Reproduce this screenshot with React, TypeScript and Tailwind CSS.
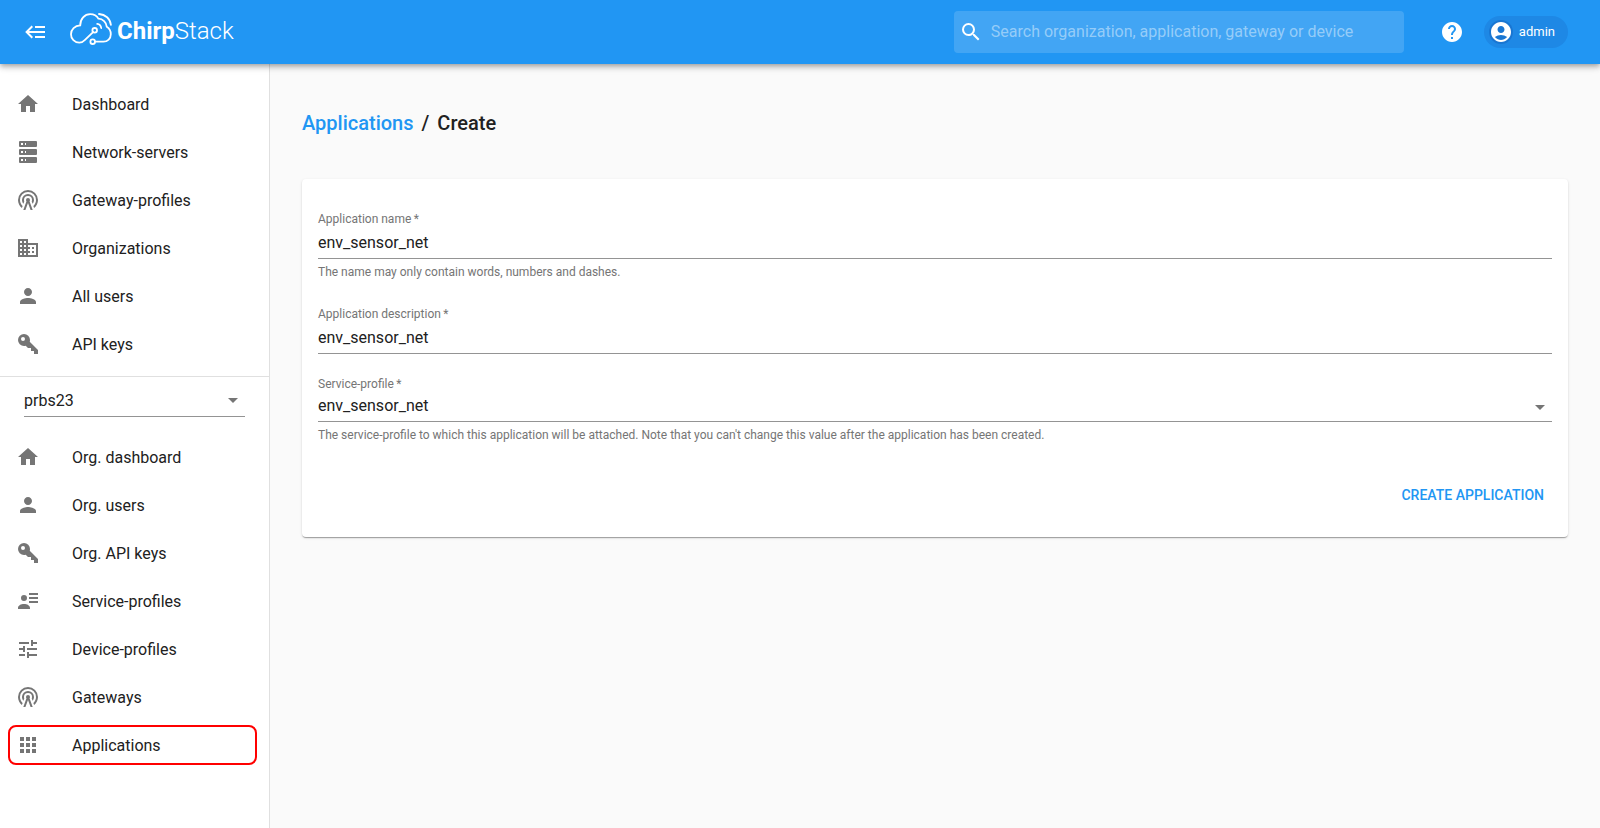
import React, { useState } from 'react';
import {
  MdAccountCircle,
  MdApps,
  MdArrowDropDown,
  MdHelp,
  MdHome,
  MdPerson,
  MdSearch,
  MdTune
} from 'react-icons/md';

interface PathIconProps {
  path: string;
  className?: string;
}

const PathIcon: React.FC<PathIconProps> = ({ path, className = 'size-6' }) => (
  <svg viewBox="0 0 24 24" fill="currentColor" className={className} aria-hidden="true">
    <path d={path} />
  </svg>
);

const PATHS = {
  backburger:
    'M5,13L9,17L7.6,18.42L1.18,12L7.6,5.58L9,7L5,11H21V13H5M21,6V8H11V6H21M21,16V18H11V16H21Z',
  server:
    'M4,1H20A1,1 0 0,1 21,2V6A1,1 0 0,1 20,7H4A1,1 0 0,1 3,6V2A1,1 0 0,1 4,1M4,9H20A1,1 0 0,1 21,10V14A1,1 0 0,1 20,15H4A1,1 0 0,1 3,14V10A1,1 0 0,1 4,9M4,17H20A1,1 0 0,1 21,18V22A1,1 0 0,1 20,23H4A1,1 0 0,1 3,22V18A1,1 0 0,1 4,17M9,5H10V3H9V5M9,13H10V11H9V13M9,21H10V19H9V21M5,3V5H7V3H5M5,11V13H7V11H5M5,19V21H7V19H5Z',
  radioTower:
    'M12,10A2,2 0 0,1 14,12C14,12.5 13.82,12.94 13.53,13.29L16.7,22H14.57L12,14.93L9.43,22H7.3L10.47,13.29C10.18,12.94 10,12.5 10,12A2,2 0 0,1 12,10M12,8A4,4 0 0,0 8,12C8,12.5 8.1,13 8.28,13.46L7.4,15.86C6.53,14.81 6,13.47 6,12A6,6 0 0,1 12,6A6,6 0 0,1 18,12C18,13.47 17.47,14.81 16.6,15.86L15.72,13.46C15.9,13 16,12.5 16,12A4,4 0 0,0 12,8M12,4A8,8 0 0,0 4,12C4,14.36 5,16.5 6.64,17.94L5.92,19.94C3.54,18.11 2,15.23 2,12A10,10 0 0,1 12,2A10,10 0 0,1 22,12C22,15.23 20.46,18.11 18.08,19.94L17.36,17.94C19,16.5 20,14.36 20,12A8,8 0 0,0 12,4Z',
  domain:
    'M18,15H16V17H18M18,11H16V13H18M20,19H12V17H14V15H12V13H14V11H12V9H20M10,7H8V5H10M10,11H8V9H10M10,15H8V13H10M10,19H8V17H10M6,7H4V5H6M6,11H4V9H6M6,15H4V13H6M6,19H4V17H6M12,7V3H2V21H22V7H12Z',
  key:
    'M22,18V22H18V19H15V16H12L9.74,13.74C9.19,13.91 8.61,14 8,14A6,6 0 0,1 2,8A6,6 0 0,1 8,2A6,6 0 0,1 14,8C14,8.61 13.91,9.19 13.74,9.74L22,18M7,5A2,2 0 0,0 5,7A2,2 0 0,0 7,9A2,2 0 0,0 9,7A2,2 0 0,0 7,5Z',
  accountDetails:
    'M13,4H22V6H13V4M13,8H22V10H13V8M13,12H22V14H13V12M8,6A3,3 0 0,1 11,9A3,3 0 0,1 8,12A3,3 0 0,1 5,9A3,3 0 0,1 8,6M14,20H2V19C2,16.5 5,15 8,15C11,15 14,16.5 14,19V20Z'
};

interface NavEntry {
  label: string;
  icon: React.ReactNode;
  marked?: boolean;
}

const GLOBAL_NAV: NavEntry[] = [
  { label: 'Dashboard', icon: <MdHome className="size-6" /> },
  { label: 'Network-servers', icon: <PathIcon path={PATHS.server} /> },
  { label: 'Gateway-profiles', icon: <PathIcon path={PATHS.radioTower} /> },
  { label: 'Organizations', icon: <PathIcon path={PATHS.domain} /> },
  { label: 'All users', icon: <MdPerson className="size-6" /> },
  { label: 'API keys', icon: <PathIcon path={PATHS.key} /> }
];

const ORG_NAV: NavEntry[] = [
  { label: 'Org. dashboard', icon: <MdHome className="size-6" /> },
  { label: 'Org. users', icon: <MdPerson className="size-6" /> },
  { label: 'Org. API keys', icon: <PathIcon path={PATHS.key} /> },
  { label: 'Service-profiles', icon: <PathIcon path={PATHS.accountDetails} /> },
  { label: 'Device-profiles', icon: <MdTune className="size-6" /> },
  { label: 'Gateways', icon: <PathIcon path={PATHS.radioTower} /> },
  { label: 'Applications', icon: <MdApps className="size-6" />, marked: true }
];

const Logo = () => (
  <a href="#" className="flex items-center gap-1 text-white">
    <svg
      viewBox="0 0 44 34"
      className="h-[34px] w-11"
      fill="none"
      stroke="currentColor"
      strokeWidth="1.8"
      strokeLinecap="round"
      aria-hidden="true"
    >
      {/* cloud, open between the two circuit nodes */}
      <path d="M24.1 19.1L16 26.9C14.2 28.8 12.6 29.7 10.3 29.7A8.3 8.3 0 0 1 2 21.2C2 16.4 5.8 12.6 11.2 12.4C11.2 5.8 15.6 1.1 21.2 1.1C24.8 1.1 27.8 2.8 29.4 5.6C33.8 5.8 37.4 9.2 37.8 13.8C40.4 15.4 41.8 18 41.8 21.2C41.8 25.6 38.6 28.7 34.4 28.7H26" />
      <circle cx="25.7" cy="17.3" r="2.3" />
      <circle cx="23.7" cy="28.7" r="2.3" />
      {/* radio waves */}
      <path d="M28.2 10.9C30.4 11.2 31.9 12.7 32.2 15" />
      <path d="M30 1C36.4 1.4 41.2 5.6 41.9 11.8" />
    </svg>
    <span className="pt-0.5 text-2xl leading-8">
      <span className="font-bold">Chirp</span>
      <span className="font-light">Stack</span>
    </span>
  </a>
);

const NavList: React.FC<{ entries: NavEntry[] }> = ({ entries }) => (
  <ul>
    {entries.map((entry) => (
      <li key={entry.label} className="py-1 pr-3 pl-2">
        <a
          href="#"
          className={`flex h-10 items-center gap-8 rounded-lg border-2 px-1.5 ${entry.marked ? 'border-[#ff0000]' : 'border-transparent'}`}
        >
          <span className="text-[#757575]">{entry.icon}</span>
          <span className="pt-0.5">{entry.label}</span>
        </a>
      </li>
    ))}
  </ul>
);

interface SelectBoxProps {
  id: string;
  value: string;
  label?: string;
  className: string;
}

const SelectBox: React.FC<SelectBoxProps> = ({ id, value, label, className }) => (
  <div className={`relative border-b border-[#949494] ${className}`}>
    <select
      id={id}
      aria-label={label}
      defaultValue={value}
      className="block h-full w-full appearance-none bg-transparent pr-8 outline-none"
    >
      <option value={value}>{value}</option>
    </select>
    <MdArrowDropDown className="pointer-events-none absolute top-[3px] right-0 size-6 text-[#757575]" />
  </div>
);

const App = () => {
  const [search, setSearch] = useState('');
  const [name, setName] = useState('env_sensor_net');
  const [description, setDescription] = useState('env_sensor_net');

  return (
    <div className="flex min-h-screen flex-col bg-[#fafafa] font-[Roboto,sans-serif] text-base text-[#212121]">
      <header className="z-10 flex h-16 items-center bg-[#2196f3] pr-8 pl-6 text-white shadow-[0_2px_4px_-1px_rgba(0,0,0,0.2),0_4px_5px_0_rgba(0,0,0,0.14),0_1px_10px_0_rgba(0,0,0,0.12)]">
        <button type="button" aria-label="Toggle menu" className="mr-[21px]">
          <PathIcon path={PATHS.backburger} />
        </button>
        <div className="-mt-1">
          <Logo />
        </div>
        <label className="ml-auto flex h-[42px] w-[450px] items-center gap-2 rounded bg-white/15 px-[5px]">
          <MdSearch className="size-6 shrink-0" />
          <input
            type="text"
            aria-label="Search"
            placeholder="Search organization, application, gateway or device"
            value={search}
            onChange={(e) => setSearch(e.target.value)}
            className="w-full bg-transparent outline-none placeholder:text-white/45"
          />
        </label>
        <button type="button" aria-label="Help" className="ml-9">
          <MdHelp className="size-6" />
        </button>
        <button
          type="button"
          className="ml-5 flex h-8 items-center gap-1.5 rounded-full bg-[#1e88e5] pr-[13px] pl-[5px] text-[13px]"
        >
          <span className="rounded-full bg-[#1976d2]">
            <MdAccountCircle className="size-6" />
          </span>
          admin
        </button>
      </header>

      <div className="flex grow">
        <nav className="w-[270px] shrink-0 border-r border-[#e0e0e0] bg-white pt-4">
          <NavList entries={GLOBAL_NAV} />
          <div className="mt-2 border-t border-[#e0e0e0] px-6 pt-2 pb-4">
            <SelectBox id="organization" label="Organization" value="prbs23" className="h-8" />
          </div>
          <NavList entries={ORG_NAV} />
        </nav>

        <main className="grow px-8 pt-[43px]">
          <h1 className="flex gap-2 text-xl leading-8 font-medium">
            <a href="#" className="text-[#2196f3]">Applications</a>
            <span>/</span>
            <span>Create</span>
          </h1>

          <form
            className="mt-10 rounded bg-white px-4 pt-8 pb-6 shadow-[0_2px_1px_-1px_rgba(0,0,0,0.2),0_1px_1px_0_rgba(0,0,0,0.14),0_1px_3px_0_rgba(0,0,0,0.12)]"
            onSubmit={(e) => e.preventDefault()}
          >
            <label htmlFor="name" className="block text-xs text-[#757575]">
              Application name&thinsp;*
            </label>
            <input
              id="name"
              type="text"
              value={name}
              onChange={(e) => setName(e.target.value)}
              className="block h-8 w-full border-b border-[#949494] outline-none"
            />
            <p className="mt-1 text-xs leading-[18px] text-[#757575]">
              The name may only contain words, numbers and dashes.
            </p>

            <label htmlFor="description" className="mt-[25px] block text-xs text-[#757575]">
              Application description&thinsp;*
            </label>
            <input
              id="description"
              type="text"
              value={description}
              onChange={(e) => setDescription(e.target.value)}
              className="block h-8 w-full border-b border-[#949494] outline-none"
            />

            <label htmlFor="service-profile" className="mt-[22px] block text-xs text-[#757575]">
              Service-profile&thinsp;*
            </label>
            <SelectBox id="service-profile" value="env_sensor_net" className="h-[30px] pb-0.5" />
            <p className="mt-1 text-xs leading-[18px] text-[#757575]">
              The service-profile to which this application will be attached. Note that you can't
              change this value after the application has been created.
            </p>

            <div className="mt-[33px] flex justify-end">
              <button type="submit" className="h-9 px-2 text-sm font-medium text-[#2196f3] uppercase">
                Create application
              </button>
            </div>
          </form>
        </main>
      </div>
    </div>
  );
};

export default App;
